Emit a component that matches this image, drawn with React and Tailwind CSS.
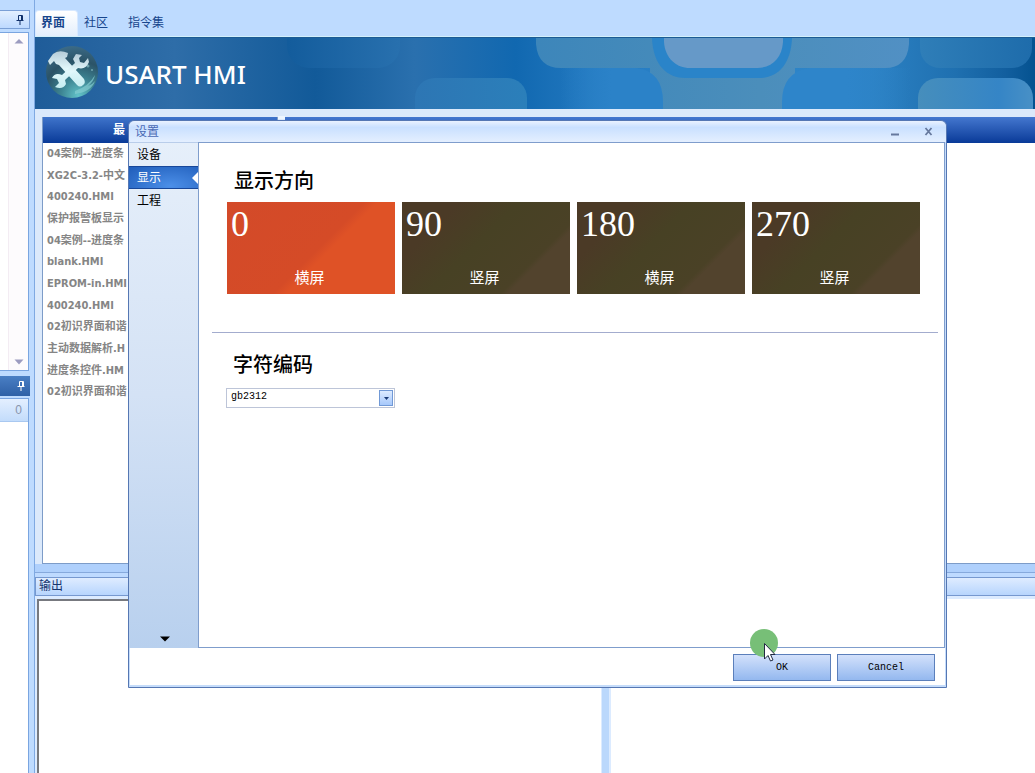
import React from 'react';

const recentFiles = [
  '04案例--进度条',
  'XG2C-3.2-中文',
  '400240.HMI',
  '保护报警板显示',
  '04案例--进度条',
  'blank.HMI',
  'EPROM-in.HMI',
  '400240.HMI',
  '02初识界面和谐',
  '主动数据解析.H',
  '进度条控件.HM',
  '02初识界面和谐',
];

const directions = [
  { angle: '0', label: '横屏', active: true },
  { angle: '90', label: '竖屏', active: false },
  { angle: '180', label: '横屏', active: false },
  { angle: '270', label: '竖屏', active: false },
];

function Pin({ className }) {
  return (
    <svg viewBox="0 0 8 10" className={className} fill="none" stroke="currentColor" aria-hidden="true">
      <path d="M2.5 0.5h4v5M2.5 0.5v5M5.5 0.5v5M0.5 5.5h7M4 6v4" />
    </svg>
  );
}

function BannerArt() {
  return (
    <svg
      className="absolute inset-0 h-full w-full"
      viewBox="0 0 1000 71"
      preserveAspectRatio="xMinYMin slice"
      aria-hidden="true"
    >
      <defs>
        <linearGradient id="base" x1="0" x2="1" y1="0" y2="0">
          <stop offset="0" stopColor="#1f5c99" />
          <stop offset="0.14" stopColor="#2e6da8" />
          <stop offset="0.28" stopColor="#125a99" />
          <stop offset="0.38" stopColor="#2a70ae" />
          <stop offset="0.48" stopColor="#1168b0" />
          <stop offset="0.56" stopColor="#2379c0" />
          <stop offset="0.7" stopColor="#2e87cc" />
          <stop offset="0.84" stopColor="#2b80c2" />
          <stop offset="0.92" stopColor="#1f70b0" />
          <stop offset="0.97" stopColor="#125f9f" />
          <stop offset="1" stopColor="#045290" />
        </linearGradient>
        <linearGradient id="left" x1="0" x2="1" y1="0" y2="0">
          <stop offset="0" stopColor="#135c9c" />
          <stop offset="1" stopColor="#2870ae" />
        </linearGradient>
        <linearGradient id="low" x1="0" x2="1" y1="0" y2="0">
          <stop offset="0" stopColor="#2d76b4" />
          <stop offset="1" stopColor="#2b7fba" />
        </linearGradient>
        <linearGradient id="corner" x1="0" x2="1" y1="0" y2="0">
          <stop offset="0" stopColor="#2f7eb8" />
          <stop offset="1" stopColor="#1e6cab" />
        </linearGradient>
        <linearGradient id="light" x1="0" x2="1" y1="0" y2="0">
          <stop offset="0" stopColor="#468ebc" />
          <stop offset="0.7" stopColor="#3585c6" />
          <stop offset="1" stopColor="#4890c6" />
        </linearGradient>
        <linearGradient id="pale" x1="0" x2="1" y1="0" y2="0">
          <stop offset="0" stopColor="#3d86ba" />
          <stop offset="0.6" stopColor="#4b8ebb" />
          <stop offset="1" stopColor="#5190c4" />
        </linearGradient>
        <linearGradient id="fade" x1="0" x2="1" y1="0" y2="0">
          <stop offset="0" stopColor="#2b82c8" stopOpacity="0" />
          <stop offset="0.5" stopColor="#2b82c8" />
        </linearGradient>
        <linearGradient id="fadeout" x1="0" x2="1" y1="0" y2="0">
          <stop offset="0.5" stopColor="#2e85ca" />
          <stop offset="1" stopColor="#2e85ca" stopOpacity="0" />
        </linearGradient>
      </defs>
      <rect width="1000" height="71" fill="url(#base)" />
      <rect x="252" y="-40" width="113" height="70" rx="22" fill="url(#left)" />
      <rect x="380" y="40" width="112" height="70" rx="20" fill="url(#low)" />
      <path d="M501 0V6Q503 30 526 30H615V71H760V30H850Q872 30 874 6V0Z" fill="url(#pale)" />
      <path d="M525 71V30H601Q628 33 628 64V71Z" fill="url(#fade)" />
      <path d="M747 71V64Q747 34 775 30H875V71Z" fill="url(#fadeout)" />
      <path d="M617 0C618 28 633 40 650 40H724C743 40 756 26 757 0Z" fill="#2a84c9" />
      <path d="M629 0V4C630 20 641 30 655 30H722C737 30 747 20 748 4V0Z" fill="#6699c8" />
      <rect x="885" y="-40" width="112" height="70" rx="20" fill="url(#corner)" />
      <rect x="883" y="40" width="115" height="80" rx="20" fill="url(#light)" />
    </svg>
  );
}

function ToolsLogo() {
  return (
    <svg viewBox="0 0 60 60" className="h-[60px] w-[60px]" aria-hidden="true">
      <defs>
        <radialGradient id="orb" cx="0.62" cy="0.95" r="0.95">
          <stop offset="0" stopColor="#62c3c9" />
          <stop offset="0.35" stopColor="#3d8593" />
          <stop offset="0.7" stopColor="#2b5367" />
          <stop offset="1" stopColor="#3b6a86" />
        </radialGradient>
        <linearGradient id="steel" x1="0" x2="0" y1="0" y2="1">
          <stop offset="0" stopColor="#b5cbd8" />
          <stop offset="0.5" stopColor="#e2f8fb" />
          <stop offset="1" stopColor="#c5edf1" />
        </linearGradient>
      </defs>
      <circle cx="31" cy="28" r="26" fill="url(#orb)" />
      <path d="M34 47Q48 42 54 31Q53 37 47 42Q52 40 54 37Q50 48 34 50Z" fill="#85cdd2" opacity="0.7" />
      <circle cx="47" cy="22" r="1.5" fill="#9bd0d6" opacity="0.6" />
      <circle cx="51" cy="26" r="1" fill="#9bd0d6" opacity="0.6" />
      <g fill="url(#steel)">
        <path d="M7 17L12 10Q18 5 27 9L26 13L24 14L43 35Q45 39 42 41Q39 44 36 41L18 21L15 20L13 17L9 21Z" />
        <path d="M41 11L35 10L32 15L34 19L21 31Q14 28 11 34L16 35L18 39L14 43Q22 46 25 40L24 36L37 24Q45 26 48 18L47 14L43 19L39 18L38 14Z" />
      </g>
    </svg>
  );
}

function LeftDock() {
  return (
    <aside className="flex w-[30px] shrink-0 flex-col pt-[10px]">
      <div className="flex h-[19px] shrink-0 items-center justify-end border border-l-0 border-[#7a9fd6] bg-linear-to-b from-[#e3efff] to-[#bdd9ff] pr-[5px]">
        <button aria-label="固定" className="text-[#10306a]">
          <Pin className="h-[10px] w-[8px]" />
        </button>
      </div>
      <div className="mt-[3px] mr-[1px] flex h-[339px] shrink-0 justify-end border border-l-0 border-[#7aa5e0] bg-white">
        <div className="flex w-[20px] flex-col items-center justify-between border-l border-[#f3ecf3] bg-[#fdfbfd] py-[5px] text-[#9c9cc0]">
          <button aria-label="向上滚动">
            <svg viewBox="0 0 10 6" className="h-[6px] w-[10px]" fill="currentColor">
              <path d="M5 1L9.500 5.500H0.500Z" />
            </svg>
          </button>
          <button aria-label="向下滚动">
            <svg viewBox="0 0 10 6" className="h-[6px] w-[10px]" fill="currentColor">
              <path d="M0.500 0.500H9.500L5 5.500Z" />
            </svg>
          </button>
        </div>
      </div>
      <div className="mt-[5px] flex h-[20px] shrink-0 items-center justify-end bg-linear-to-b from-[#4a7fc4] to-[#2e60a6] pr-[5px]">
        <button aria-label="固定" className="text-white">
          <Pin className="h-[10px] w-[8px]" />
        </button>
      </div>
      <div className="mt-[2px] mr-[1px] flex-1 border border-l-0 border-b-0 border-[#7aa5e0] bg-white">
        <div className="h-[23px] border-b border-[#a9c8f0] bg-linear-to-b from-[#e4efff] to-[#c3dcfb] pr-[6px] text-right text-[12px] leading-[22px] text-[#8995ad]">
          0
        </div>
      </div>
    </aside>
  );
}

function Workspace() {
  return (
    <main className="ml-[4px] flex min-w-0 flex-1 flex-col border-l border-[#7fa9e2]">
      <nav className="flex h-[37px] shrink-0 items-end border-b border-[#d3f0fb] text-[12px] text-[#17458c]">
        <a
          href="#ui"
          className="flex h-[26px] w-[43px] items-center rounded-t-sm border border-b-0 border-[#d8e9ff] bg-linear-to-b from-white to-[#e3eefc] pb-[2px] pl-[5px] font-bold"
        >
          界面
        </a>
        <a href="#community" className="flex h-[26px] items-center pl-[6px]">社区</a>
        <a href="#commands" className="flex h-[26px] items-center pl-[20px]">指令集</a>
      </nav>
      <header className="relative flex h-[72px] shrink-0 items-center overflow-hidden border-t border-[#1c5b94] bg-[#1f66a6]">
        <BannerArt />
        <div className="relative flex items-center gap-[4px] pl-[6px]">
          <ToolsLogo />
          <h1 className="font-['Noto_Sans','Noto_Sans_CJK_SC',sans-serif] text-[26px] leading-[30px] font-medium text-white">
            USART HMI
          </h1>
        </div>
      </header>
      <div className="flex h-[455px] shrink-0 bg-[#dbe9fb] pt-[8px] pl-[7px]">
        <section className="flex w-[236px] shrink-0 flex-col border border-y-0 border-[#7d9cc8]">
          <h2 className="h-[26px] shrink-0 bg-linear-to-b from-[#3f74cb] to-[#083a98] pl-[70px] text-[12px] leading-[26px] font-bold text-white">
            最
          </h2>
          <div className="flex-1 border-b border-[#7d9cc8] bg-white">
            <ul className="grid h-[260px] grid-rows-12 pl-[4px] font-['DejaVu_Sans_Condensed','DejaVu_Sans','Noto_Sans_CJK_SC',sans-serif] text-[11px] font-bold text-[#858585]">
              {recentFiles.map((name, i) => (
                <li key={i} className="leading-[21px] whitespace-nowrap">
                  <a href="#file">{name}</a>
                </li>
              ))}
            </ul>
          </div>
        </section>
        <div className="-mt-[1px] h-[3px] w-[7px] shrink-0 bg-[#eef6ff]" />
        <section className="flex flex-1 flex-col">
          <div className="h-[26px] shrink-0 bg-linear-to-b from-[#4477cf] to-[#083a98]" />
          <div className="flex-1 border-b border-[#7d9cc8] bg-white" />
        </section>
      </div>
      <div className="h-[8px] shrink-0 bg-[#afd0fc]" />
      <div className="h-[5px] shrink-0 border-t border-[#86a9dc] bg-[#bedaff]" />
      <h2 className="h-[19px] shrink-0 border border-r-0 border-[#7698cf] bg-linear-to-b from-[#dfecff] to-[#b7d5fd] pl-[3px] text-[12px] leading-[17px] text-[#17356e]">
        输出
      </h2>
      <div className="flex flex-1 bg-[#dcebff] pt-[3px] pl-[2px]">
        <div className="w-[564px] shrink-0 border-t-2 border-l-2 border-[#77797f] bg-white" />
        <div className="ml-[1px] w-[7px] shrink-0 bg-[#bbd8fc]" />
        <div className="ml-[2px] flex-1 bg-white" />
      </div>
    </main>
  );
}

function Card({ angle, label, active }) {
  const skin = active
    ? 'bg-linear-[135deg,#d34a29_0%,#d54b27_53%,#df5226_58%,#df5226_100%]'
    : 'bg-linear-[135deg,#4b3a26_0%,#4b3a26_22%,#474124_45%,#4a4126_73%,#52432d_76%,#52432d_100%]';
  return (
    <button
      aria-pressed={active}
      className={`flex h-[92px] flex-col justify-between pb-[6px] text-white ${skin}`}
    >
      <span className="self-start pl-[4px] font-['Liberation_Serif',serif] text-[36px] leading-[44px]">{angle}</span>
      <span className="self-center pr-[3px] text-[15px] leading-[20px]">{label}</span>
    </button>
  );
}

function SettingsDialog() {
  return (
    <div
      role="dialog"
      aria-label="设置"
      className="absolute top-[120px] right-[88px] left-[128px] flex flex-col rounded-t-md border border-[#5577b3] bg-[#c5dcfa] pb-[2px]"
    >
      <div className="flex h-[21px] items-center justify-between rounded-t-md bg-linear-to-b from-[#eaf2ff] via-[#c9e0ff] via-30% to-[#e4efff] pr-[13px] pl-[6px] text-[12px] text-[#4a6ab5]">
        <h2>设置</h2>
        <div className="flex gap-[24px] text-[#66799e]">
          <button aria-label="最小化">
            <svg viewBox="0 0 9 9" className="h-[9px] w-[9px]" fill="currentColor"><path d="M0 6.500h8v2H0z" /></svg>
          </button>
          <button aria-label="关闭">
            <svg viewBox="0 0 9 9" className="h-[9px] w-[9px]" stroke="currentColor" strokeWidth="1.800"><path d="M1.500 1L7.500 8M7.500 1L1.500 8" /></svg>
          </button>
        </div>
      </div>
      <div className="mr-[1px] flex h-[506px]">
        <nav className="flex w-[69px] shrink-0 flex-col bg-linear-to-b from-[#e6effa] via-[#d4e2f5] to-[#b8d0ee] text-[12px] text-black">
          <button className="h-[24px] border-t border-[#b9cdea] pl-[8px] text-left">设备</button>
          <button className="flex h-[23px] items-center justify-between border-y border-[#17479a] bg-radial-[at_60%_90%] from-[#4c8fe8] to-[#1f5dba] pl-[8px] text-white">
            显示
            <svg viewBox="0 0 6 12" className="h-[12px] w-[6px]" fill="#fff" aria-hidden="true"><path d="M6 0V12L0 6Z" /></svg>
          </button>
          <button className="h-[23px] pl-[8px] text-left">工程</button>
          <button aria-label="更多" className="mt-auto mb-[6px] ml-[31px] h-[7px] w-[9px]">
            <svg viewBox="0 0 10 6" className="h-[6px] w-[10px]"><path d="M0 0.500H10L5 5.500Z" /></svg>
          </button>
        </nav>
        <div className="min-w-0 flex-1 border border-[#7f9dcc] bg-white pl-[13px]">
          <section className="pt-[23px] pr-[24px] pl-[15px]">
            <h3 className="pl-[7px] text-[20px] leading-[30px] font-medium">显示方向</h3>
            <div className="mt-[6px] grid grid-cols-4 gap-[7px]">
              {directions.map((d) => (
                <Card key={d.angle} {...d} />
              ))}
            </div>
          </section>
          <hr className="mt-[38px] mr-[6px] border-[#a3acce]" />
          <section className="pt-[17px] pl-[14px]">
            <label htmlFor="encoding" className="block pl-[7px] text-[20px] leading-[30px] font-medium">
              字符编码
            </label>
            <div className="relative mt-[8px] w-[169px]">
              <select
                id="encoding"
                defaultValue="gb2312"
                className="block h-[20px] w-full appearance-none border border-[#bdc5d8] bg-white pb-[2px] pl-[4px] font-['Liberation_Mono',monospace] text-[10px] leading-[16px] text-black"
              >
                <option>gb2312</option>
              </select>
              <span className="pointer-events-none absolute top-[2px] right-[2px] flex h-[16px] w-[14px] items-center justify-center border border-[#7199d6] bg-linear-to-b from-[#dceaff] to-[#a6c8fb]">
                <svg viewBox="0 0 5 3" className="h-[3px] w-[5px]" fill="#1a3a75"><path d="M0 0H5L2.500 3Z" /></svg>
              </span>
            </div>
          </section>
        </div>
      </div>
      <div className="mx-[1px] flex h-[37px] justify-end gap-[6px] bg-white pt-[6px] pr-[10px] font-['Liberation_Mono',monospace] text-[10px] text-black">
        <button className="h-[27px] w-[98px] border border-[#5b7fbb] bg-linear-to-b from-[#d3e1fb] to-[#94b8ef]">OK</button>
        <button className="h-[27px] w-[98px] border border-[#5b7fbb] bg-linear-to-b from-[#d3e1fb] to-[#94b8ef]">Cancel</button>
      </div>
    </div>
  );
}

function Pointer() {
  return (
    <svg viewBox="0 0 30 34" className="pointer-events-none absolute top-[629px] left-[749px] h-[34px] w-[30px]" aria-hidden="true">
      <circle cx="15" cy="14" r="14" fill="#77bf77" />
      <path d="M15.500 14.500V30L19 26.500L21.500 32L24 31L21.500 25.500H26Z" fill="#fff" stroke="#222c44" />
    </svg>
  );
}

export default function App() {
  return (
    <div className="relative flex min-h-screen w-full overflow-hidden bg-[#bedbff] font-['Liberation_Sans','Noto_Sans_CJK_SC',sans-serif]">
      <LeftDock />
      <Workspace />
      <SettingsDialog />
      <Pointer />
    </div>
  );
}
